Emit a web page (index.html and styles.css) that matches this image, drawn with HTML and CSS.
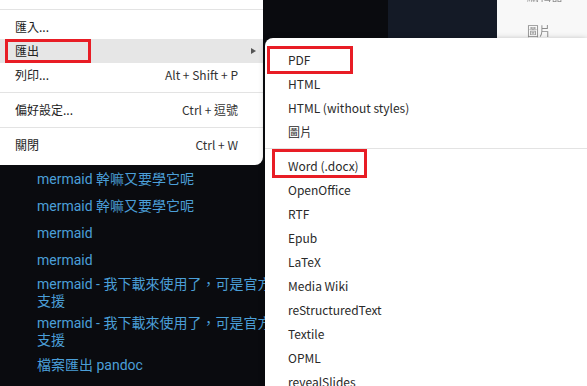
FILE: index.html
```html
<!DOCTYPE html>
<html lang="zh-Hant">
<head>
<meta charset="utf-8">
<title>匯出</title>
<link rel="stylesheet" href="styles.css">
</head>
<body>
<div class="desktop">
  <div class="col col-dark">
    <ul class="notes">
      <li class="note">mermaid 幹嘛又要學它呢</li>
      <li class="note">mermaid 幹嘛又要學它呢</li>
      <li class="note">mermaid</li>
      <li class="note">mermaid</li>
      <li class="note wrap">mermaid - 我下載來使用了，可是官方沒有中文<br>支援</li>
      <li class="note wrap">mermaid - 我下載來使用了，可是官方沒有中文<br>支援</li>
      <li class="note">檔案匯出 pandoc</li>
    </ul>
  </div>
  <div class="col col-navy"></div>
  <div class="col col-light">
    <div class="labels">
      <span class="label">編輯器</span>
      <span class="label">圖片</span>
    </div>
  </div>
</div>

<div class="menu">
  <div class="sep"></div>
  <div class="item"><span class="lbl">匯入...</span><span class="key"></span><span class="tail"></span></div>
  <div class="item active"><span class="lbl">匯出</span><span class="key"></span><span class="tail"><i class="arrow"></i></span></div>
  <div class="item"><span class="lbl">列印...</span><span class="key">Alt + Shift + P</span><span class="tail"></span></div>
  <div class="sep"></div>
  <div class="item"><span class="lbl">偏好設定...</span><span class="key">Ctrl + 逗號</span><span class="tail"></span></div>
  <div class="sep"></div>
  <div class="item"><span class="lbl">關閉</span><span class="key">Ctrl + W</span><span class="tail"></span></div>
</div>

<div class="submenu">
  <div class="sitem">PDF</div>
  <div class="sitem">HTML</div>
  <div class="sitem">HTML (without styles)</div>
  <div class="sitem">圖片</div>
  <div class="ssep"></div>
  <div class="sitem">Word (.docx)</div>
  <div class="sitem">OpenOffice</div>
  <div class="sitem">RTF</div>
  <div class="sitem">Epub</div>
  <div class="sitem">LaTeX</div>
  <div class="sitem">Media Wiki</div>
  <div class="sitem">reStructuredText</div>
  <div class="sitem">Textile</div>
  <div class="sitem">OPML</div>
  <div class="sitem">revealSlides</div>
</div>

<div class="mark mark-export"></div>
<div class="mark mark-pdf"></div>
<div class="mark mark-word"></div>
</body>
</html>
```

FILE: styles.css
```css
* { box-sizing: border-box; }

html, body {
  margin: 0;
  padding: 0;
}

body {
  width: 587px;
  height: 386px;
  overflow: hidden;
  position: relative;
  font-family: "Noto Sans CJK TC", "Noto Sans", sans-serif;
  background: #0a0b0f;
}

.desktop {
  display: grid;
  grid-template-columns: 388px 109px 1fr;
  height: 386px;
}

.col-dark { background: #0a0b0f; }
.col-navy { background: #141a26; }
.col-light { background: #f8f8f8; overflow: hidden; }

.notes {
  list-style: none;
  margin: 0;
  padding: 166px 0 0 37px;
  font-family: Roboto, "Noto Sans CJK TC", sans-serif;
  font-size: 14px;
  line-height: 17px;
  color: #4b9fd8;
  white-space: nowrap;
}

.note { padding: 5px 0; }
.note.wrap { padding: 2px 0 3px; }

.labels {
  display: flex;
  flex-direction: column;
  gap: 18px;
  margin-top: -13px;
  padding-left: 30px;
  font-size: 12px;
  line-height: 17px;
  color: #8c8c8c;
  filter: blur(0.5px);
}

/* main file menu */
.menu {
  position: absolute;
  left: 0;
  top: 0;
  width: 263px;
  padding: 4px 0 8px;
  background: #fff;
  border-radius: 0 0 8px 0;
  font-size: 12px;
  color: #222;
}

.sep {
  height: 1px;
  margin: 5px 0;
  background: #e3e3e3;
}

.item {
  display: flex;
  align-items: center;
  height: 24px;
  line-height: 24px;
  padding-left: 15px;
}

.item.active { background: #e6e6e6; }

.lbl { flex: 1; }
.key { color: #333; }

.tail {
  width: 25px;
  display: flex;
  align-items: center;
  padding-left: 13px;
}

.arrow {
  display: block;
  width: 0;
  height: 0;
  border-left: 5px solid #555;
  border-top: 3.5px solid transparent;
  border-bottom: 3.5px solid transparent;
}

/* export submenu */
.submenu {
  position: absolute;
  left: 265px;
  top: 38px;
  right: 0;
  height: 380px;
  padding-top: 10px;
  background: #fff;
  border-radius: 8px 0 0 0;
  box-shadow: 0 1px 6px rgba(0, 0, 0, 0.28);
  font-size: 12px;
  color: #2a2a2a;
}

.sitem {
  height: 24px;
  line-height: 24px;
  padding-left: 23px;
  white-space: nowrap;
}

.ssep {
  height: 1px;
  margin: 4px 0 5px;
  background: #e3e3e3;
}

/* red annotation boxes */
.mark {
  position: absolute;
  border: 3px solid #e81d25;
}

.mark-export { left: 5px; top: 39px; width: 86px; height: 24px; }
.mark-pdf { left: 267px; top: 46px; width: 86px; height: 28px; }
.mark-word { left: 272px; top: 149px; width: 95px; height: 29px; }
```
